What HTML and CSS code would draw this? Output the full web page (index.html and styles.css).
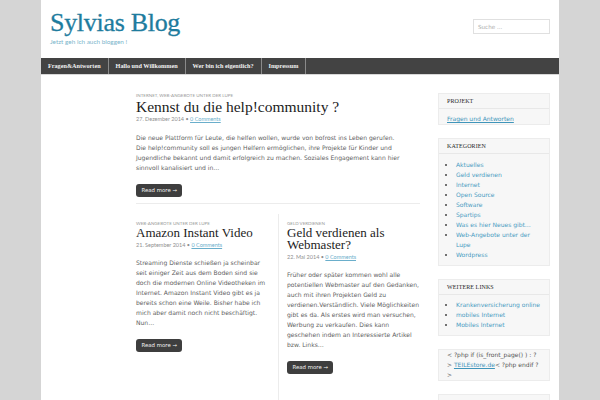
FILE: index.html
```html
<!DOCTYPE html>
<html lang="de">
<head>
<meta charset="utf-8">
<title>Sylvias Blog</title>
<link rel="stylesheet" href="styles.css">
</head>
<body>
<div class="page">
  <header class="site-header">
    <div class="branding">
      <h1 class="site-title">Sylvias Blog</h1>
      <p class="tagline">Jetzt geh ich auch bloggen !</p>
    </div>
    <div class="search"><span class="placeholder">Suche ...</span></div>
  </header>
  <nav class="nav">
    <a class="nav-item">Fragen&amp;Antworten</a>
    <a class="nav-item">Hallo und Willkommen</a>
    <a class="nav-item">Wer bin ich eigentlich?</a>
    <a class="nav-item">Impressum</a>
  </nav>
  <div class="main">
    <div class="content">
      <article class="post featured">
        <div class="cat">Internet, Web-Angebote unter der Lupe</div>
        <h2 class="title big">Kennst du die help!community ?</h2>
        <div class="meta">27. Dezember 2014 &bull; <a class="comments">0 Comments</a></div>
        <p class="excerpt">Die neue Plattform für Leute, die helfen wollen, wurde von bofrost ins Leben gerufen. Die help!community soll es jungen Helfern ermöglichen, ihre Projekte für Kinder und Jugendliche bekannt und damit erfolgreich zu machen. Soziales Engagement kann hier sinnvoll kanalisiert und in…</p>
        <a class="btn">Read more &rarr;</a>
      </article>
      <div class="row">
        <article class="post col left">
          <div class="cat">Web-Angebote unter der Lupe</div>
          <h2 class="title">Amazon Instant Video</h2>
          <div class="meta">21. September 2014 &bull; <a class="comments">0 Comments</a></div>
          <p class="excerpt">Streaming Dienste schießen ja scheinbar seit einiger Zeit aus dem Boden sind sie doch die modernen Online Videotheken im Internet. Amazon Instant Video gibt es ja bereits schon eine Weile. Bisher habe ich mich aber damit noch nicht beschäftigt. Nun…</p>
          <a class="btn">Read more &rarr;</a>
        </article>
        <article class="post col right">
          <div class="cat">Geld verdienen</div>
          <h2 class="title">Geld verdienen als Webmaster?</h2>
          <div class="meta">22. Mai 2014 &bull; <a class="comments">0 Comments</a></div>
          <p class="excerpt">Früher oder später kommen wohl alle potentiellen Webmaster auf den Gedanken, auch mit ihren Projekten Geld zu verdienen.Verständlich. Viele Möglichkeiten gibt es da. Als erstes wird man versuchen, Werbung zu verkaufen. Dies kann geschehen indem an Interessierte Artikel bzw. Links…</p>
          <a class="btn">Read more &rarr;</a>
        </article>
      </div>
    </div>
    <aside class="sidebar">
      <section class="widget">
        <h3 class="widget-title">Projekt</h3>
        <div class="widget-body single"><a class="ulink">Fragen und Antworten</a></div>
      </section>
      <section class="widget">
        <h3 class="widget-title">Kategorien</h3>
        <ul class="widget-body list">
          <li><a>Aktuelles</a></li>
          <li><a>Geld verdienen</a></li>
          <li><a>Internet</a></li>
          <li><a>Open Source</a></li>
          <li><a>Software</a></li>
          <li><a>Spartips</a></li>
          <li><a>Was es hier Neues gibt…</a></li>
          <li><a>Web-Angebote unter der Lupe</a></li>
          <li><a>Wordpress</a></li>
        </ul>
      </section>
      <section class="widget">
        <h3 class="widget-title">Weitere Links</h3>
        <ul class="widget-body list">
          <li><a>Krankenversicherung online</a></li>
          <li><a>mobiles Internet</a></li>
          <li><a>Mobiles Internet</a></li>
        </ul>
      </section>
      <section class="widget">
        <p class="widget-body textw">&lt; ?php if (is_front_page() ) : ? &gt; <a class="ulink">TEILEstore.de</a>&lt; ?php endif ? &gt;</p>
      </section>
      <section class="widget">
        <h3 class="widget-title">Meta</h3>
      </section>
    </aside>
  </div>
</div>
</body>
</html>
```

FILE: styles.css
```css
* { box-sizing: border-box; }
html, body { margin: 0; padding: 0; }
body {
  background: #d5d5d5;
  font-family: "DejaVu Sans", Verdana, sans-serif;
  color: #555;
  height: 400px;
  overflow: hidden;
}
a { color: inherit; text-decoration: none; }
h1, h2, h3, p, ul { margin: 0; padding: 0; font-weight: normal; }

.page {
  margin-left: 41px;
  width: 518px;
  min-height: 400px;
  background: #fff;
}

.site-header {
  height: 58px;
  padding: 8px 9px 0 9px;
  display: flex;
  justify-content: space-between;
  align-items: flex-start;
}
.site-title {
  font-family: "Liberation Serif", "Times New Roman", serif;
  font-size: 26px;
  line-height: 30px;
  letter-spacing: -0.3px;
  color: #1e7c9e;
  -webkit-text-stroke: 0.3px #1e7c9e;
}
.tagline {
  font-family: Lato, "Liberation Sans", sans-serif;
  font-size: 6.4px;
  line-height: 8px;
  color: #7ab5cb;
}
.search {
  margin-top: 11px;
  width: 77px;
  height: 15px;
  border: 1px solid #e0e0e0;
  padding-left: 4px;
  display: flex;
  align-items: center;
}
.placeholder {
  font-size: 5.6px;
  color: #aaa;
}

.nav {
  height: 16px;
  background: #434343;
  display: flex;
  border-bottom: 1px solid #d8d8d8;
  box-sizing: content-box;
}
.nav-item {
  font-family: "Liberation Serif", "Times New Roman", serif;
  font-weight: bold;
  font-size: 6.2px;
  line-height: 16px;
  color: #f2f2f2;
  padding: 0 7px;
  border-right: 1px solid #8a8a8a;
}

.main {
  display: flex;
  padding: 17.5px 9px 0 95px;
  gap: 18px;
}
.content { width: 284px; }

.cat {
  font-family: Lato, "Liberation Sans", sans-serif;
  font-size: 4.5px;
  line-height: 5px;
  text-transform: uppercase;
  color: #9a9a9a;
}
.title {
  font-family: "Liberation Serif", "Times New Roman", serif;
  font-size: 13px;
  line-height: 12px;
  color: #1c1c1c;
  padding-top: 0.5px;
}
.title.big {
  font-size: 15.5px;
  line-height: 17px;
  padding-top: 0;
}
.meta {
  font-family: Lato, "Liberation Sans", sans-serif;
  font-size: 5.5px;
  line-height: 8px;
  color: #8f8f8f;
  margin-top: 2px;
}
.featured .meta { margin-top: 0; }
.comments {
  color: #6aaecb;
  text-decoration: underline;
}
.excerpt {
  font-size: 6.05px;
  line-height: 10px;
  color: #626262;
  margin-top: 9.5px;
}
.featured .excerpt { margin-top: 10.5px; margin-right: 14px; }
.btn {
  display: inline-block;
  margin-top: 11px;
  height: 13px;
  line-height: 13px;
  padding: 0 5.5px;
  background: #3e3e3e;
  border-radius: 3px;
  color: #f5f5f5;
  font-size: 5.4px;
}
.featured {
  padding-bottom: 6px;
  border-bottom: 1px solid #ececec;
}

.row {
  display: flex;
  padding-top: 10px;
}
.col {
  padding-top: 7px;
  padding-bottom: 19px;
  border-bottom: 1px solid #ececec;
  height: 189px;
}
.col .btn { margin-top: 11px; }
.col.left { width: 134px; margin-right: 8px; }
.col.right {
  width: 142px;
  border-left: 1px solid #ececec;
  border-bottom: none;
  padding-left: 8px;
  position: relative;
}
.col.right::after {
  content: "";
  position: absolute;
  left: 8px;
  right: 0;
  bottom: 0;
  border-bottom: 1px solid #ececec;
}

.sidebar {
  width: 112px;
  display: flex;
  flex-direction: column;
  gap: 13px;
}
.widget {
  background: #f7f7f7;
  border: 1px solid #ececec;
}
.widget-title {
  font-family: "Liberation Serif", "Times New Roman", serif;
  font-size: 6px;
  line-height: 14px;
  text-transform: uppercase;
  letter-spacing: 0.1px;
  color: #2a2a2a;
  padding: 0 8px;
  border-bottom: 1px solid #e8e8e8;
}
.widget-body {
  font-size: 6px;
  line-height: 10px;
  padding: 5.5px 8px 5px 8px;
}
.widget-body.single { padding-bottom: 0; }
.ulink { color: #3f95ba; text-decoration: underline; }
.list {
  list-style: disc outside;
  padding-left: 17px;
  color: #444;
}
.list a { color: #4a9cc2; }
.textw {
  padding: 0 8px;
  color: #555;
}
```
